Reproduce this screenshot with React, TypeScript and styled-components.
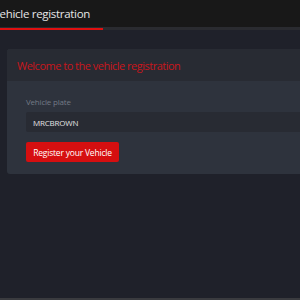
import React from "react";
import styled, { createGlobalStyle } from "styled-components";

const Global = createGlobalStyle`
  html, body { margin: 0; padding: 0; background: #1f212a; }
  body { font-family: "Open Sans", "Liberation Sans", sans-serif; overflow: hidden; }
`;

const Page = styled.div`
  width: 300px;
  height: 300px;
  display: flex;
  flex-direction: column;
  background: #1f212a;
  overflow: hidden;
`;

const TopBar = styled.header`
  height: 27px;
  background: #181818;
  border-bottom: 3px solid #2a2b30;
  display: flex;
  align-items: stretch;
  flex-shrink: 0;
`;

const Tab = styled.div`
  margin-left: -19px;
  margin-bottom: -3px;
  padding: 0 13px 2px 12px;
  display: flex;
  align-items: center;
  color: #e6e6e6;
  font-size: 11.5px;
  letter-spacing: -0.3px;
  border-bottom: 2px solid #e01010;
  white-space: nowrap;
`;

const Content = styled.main`
  flex: 1;
  padding: 19px 0 0 7px;
  display: flex;
  flex-direction: column;
`;

const Card = styled.section`
  margin-right: -20px;
  background: #2e333d;
  border-radius: 3px;
  overflow: hidden;
`;

const CardHeader = styled.div`
  height: 32px;
  background: #282b33;
  display: flex;
  align-items: center;
  padding-left: 10px;
  color: #c8161c;
  font-size: 11px;
  letter-spacing: -0.5px;
`;

const CardBody = styled.div`
  padding: 15px 0 12px 19px;
  display: flex;
  flex-direction: column;
`;

const Label = styled.label`
  font-size: 8px;
  letter-spacing: -0.2px;
  color: #737a86;
  line-height: 11px;
  margin-bottom: 5px;
`;

const Input = styled.div`
  height: 20px;
  background: #282b33;
  color: #e2e2e2;
  font-size: 8px;
  letter-spacing: -0.2px;
  display: flex;
  align-items: center;
  padding-left: 7px;
  border-radius: 2px;
`;

const Button = styled.button`
  margin-top: 10px;
  align-self: flex-start;
  height: 20px;
  width: 93px;
  background: #d60f10;
  color: #ffffff;
  border: none;
  border-radius: 2px;
  font-family: "Open Sans", "Liberation Sans", sans-serif;
  font-size: 8.5px;
  letter-spacing: -0.2px;
  padding: 0;
  cursor: pointer;
`;

const Footer = styled.footer`
  height: 2px;
  background: #3a3b3f;
  flex-shrink: 0;
`;

export default function App() {
  return (
    <>
      <Global />
      <Page>
        <TopBar>
          <Tab>Vehicle registration</Tab>
        </TopBar>
        <Content>
          <Card>
            <CardHeader>Welcome to the vehicle registration</CardHeader>
            <CardBody>
              <Label>Vehicle plate</Label>
              <Input>MRCBROWN</Input>
              <Button>Register your Vehicle</Button>
            </CardBody>
          </Card>
        </Content>
        <Footer />
      </Page>
    </>
  );
}
